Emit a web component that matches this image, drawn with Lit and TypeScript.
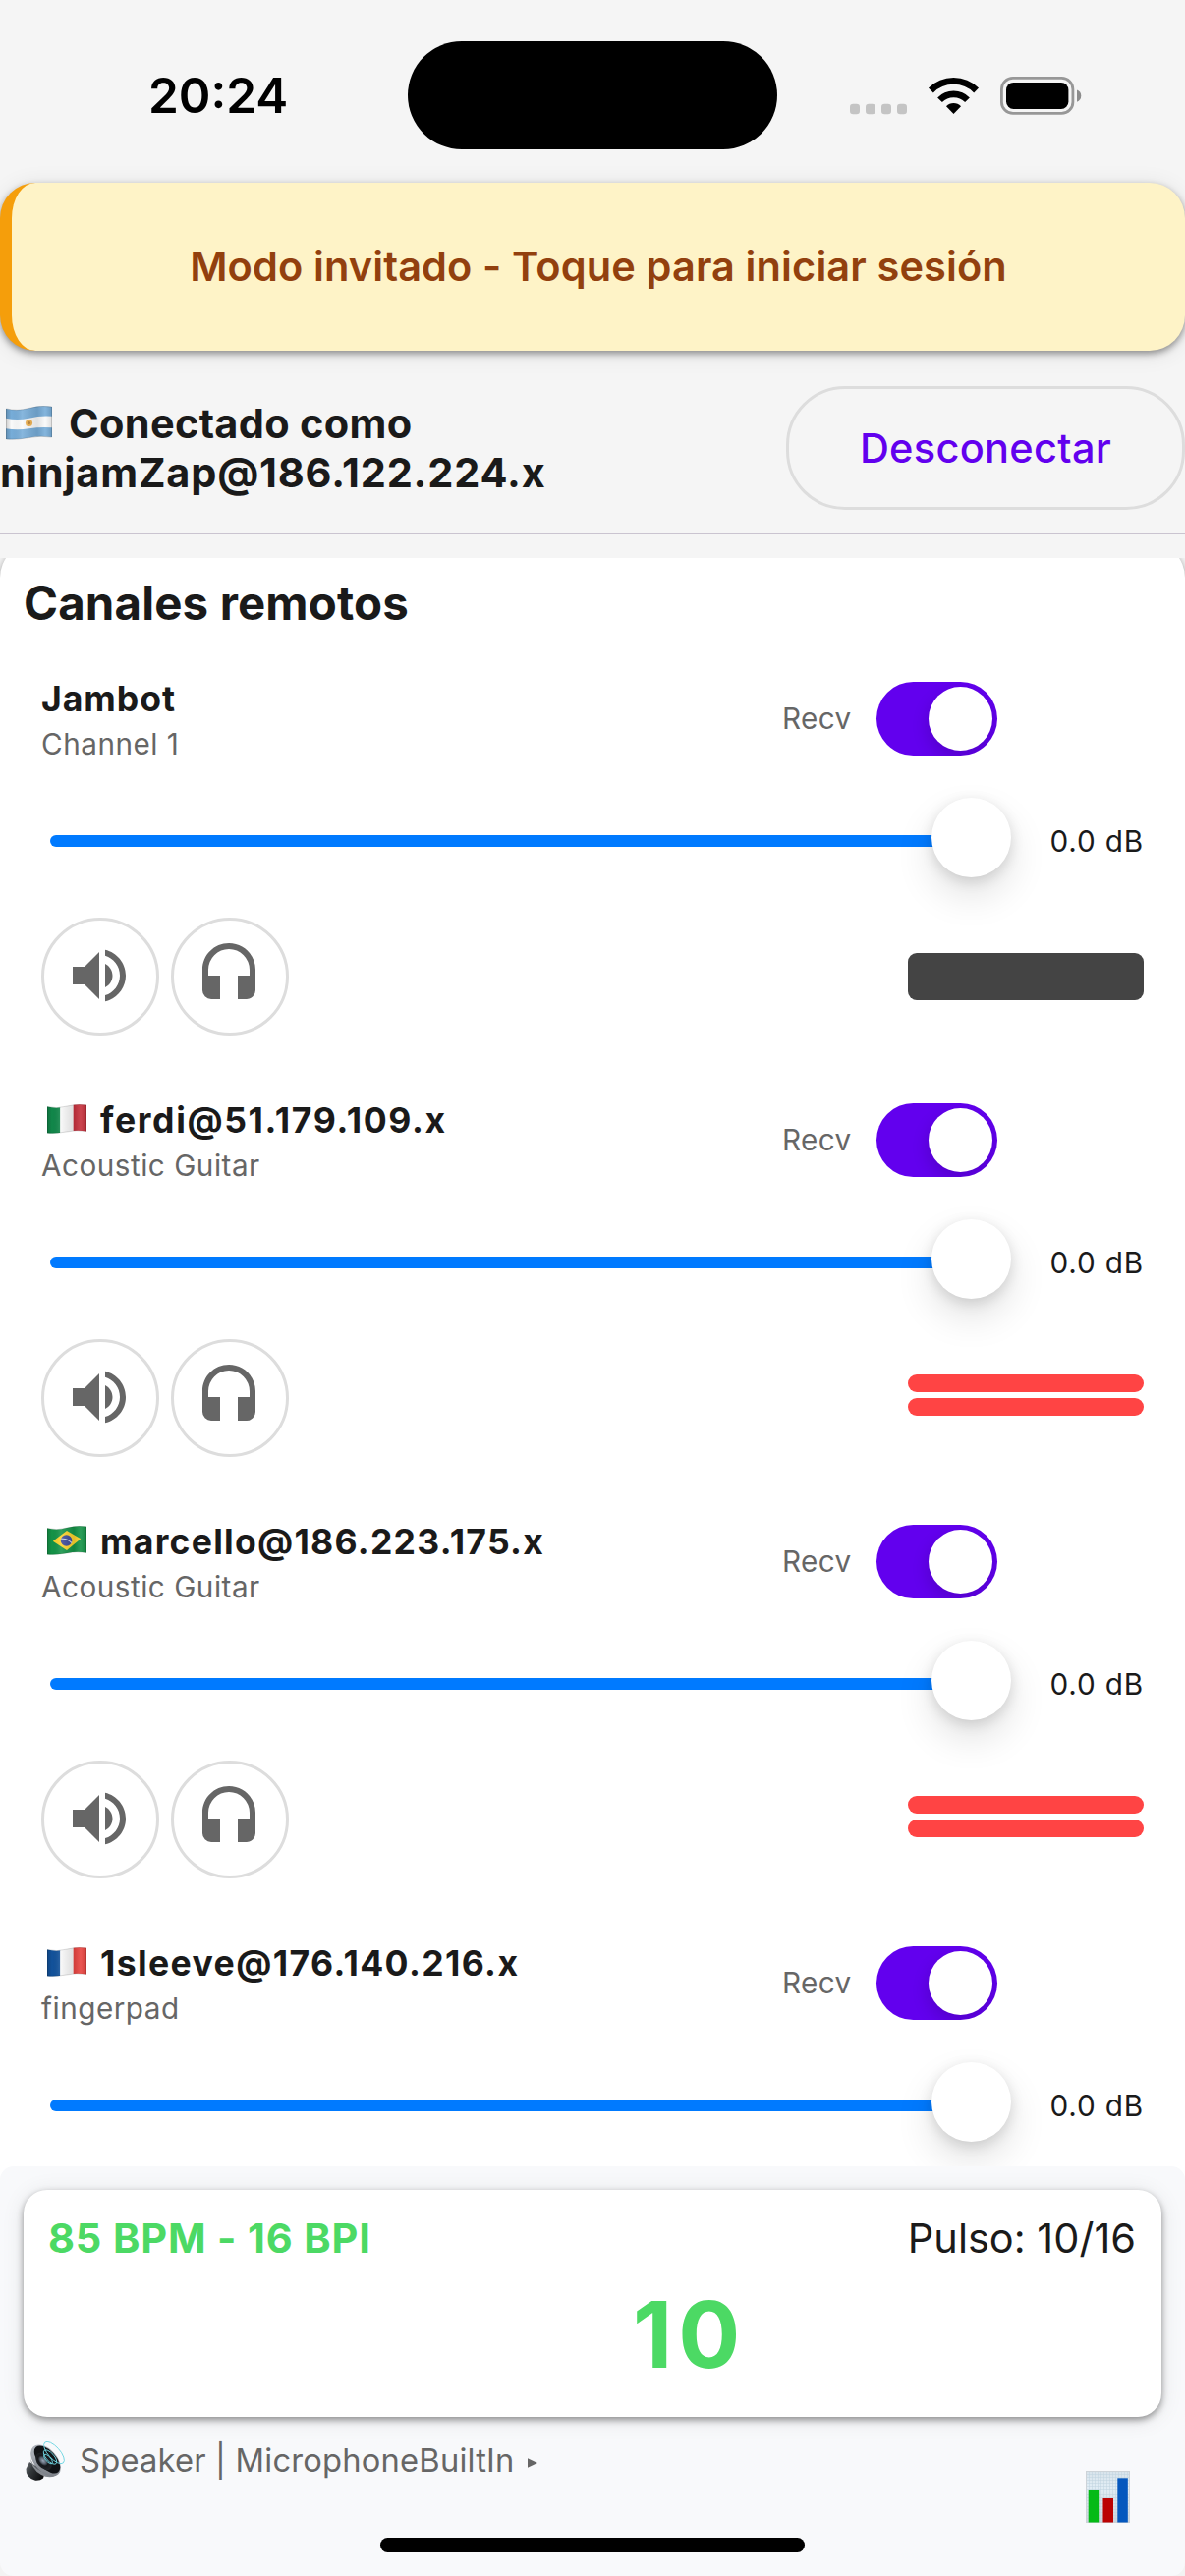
import { LitElement, html, css, svg, nothing } from "lit";
import { customElement, property } from "lit/decorators.js";
import { styleMap } from "lit/directives/style-map.js";

type Country = "ar" | "it" | "br" | "fr";

interface Channel {
  user: string;
  country?: Country;
  name: string;
  gain: string;
  clipping: boolean;
  tracking: number;
}

const CHANNELS: Channel[] = [
  { user: "Jambot", name: "Channel 1", gain: "0.0 dB", clipping: false, tracking: 0.95 },
  { user: "ferdi@51.179.109.x", country: "it", name: "Acoustic Guitar", gain: "0.0 dB", clipping: true, tracking: 1.63 },
  { user: "marcello@186.223.175.x", country: "br", name: "Acoustic Guitar", gain: "0.0 dB", clipping: true, tracking: 1.26 },
  { user: "1sleeve@176.140.216.x", country: "fr", name: "fingerpad", gain: "0.0 dB", clipping: true, tracking: 1.38 },
];

/** Waving flag, drawn on a 48x36 cloth. */
@customElement("country-flag")
export class CountryFlag extends LitElement {
  static styles = css`
    :host {
      display: inline-block;
      line-height: 0;
    }
    svg {
      display: block;
      width: 100%;
      height: 100%;
    }
  `;

  @property() country: Country = "ar";

  private cloth() {
    switch (this.country) {
      case "it":
        return svg`<rect width="16" height="36" fill="#11874a"/><rect x="16" width="16" height="36" fill="#f7f7f7"/><rect x="32" width="16" height="36" fill="#c6303c"/>`;
      case "fr":
        return svg`<rect width="16" height="36" fill="#12529b"/><rect x="16" width="16" height="36" fill="#f7f7f7"/><rect x="32" width="16" height="36" fill="#e8433f"/>`;
      case "br":
        return svg`<rect width="48" height="36" fill="#149347"/><path d="M7 19L24 6L41 16L24 30Z" fill="#fcd22c"/><circle cx="23.5" cy="18" r="7" fill="#3c4a9b"/><path d="M17 16q7-1 13 5" fill="none" stroke="#cfd8ea" stroke-width="1.3"/>`;
      default:
        return svg`<rect width="48" height="36" fill="#77add9"/><path d="M0 13q12 3 24 0t24-2v12q-12-1-24 1t-24 0z" fill="#fafafa"/><circle cx="24" cy="18" r="3.6" fill="#eeb04e"/><circle cx="24" cy="18" r="1.6" fill="#b98035"/>`;
    }
  }

  render() {
    return html`<svg viewBox="0 0 48 36" preserveAspectRatio="none">
      <defs>
        <clipPath id="wave"><path d="M0 3Q12 6 24 2.500T48 1V33Q36 31 24 33.500T0 35Z" /></clipPath>
        <linearGradient id="fold" x1="0" x2="1" y1="0" y2="0">
          <stop offset="0" stop-color="#000" stop-opacity=".18" />
          <stop offset=".12" stop-color="#000" stop-opacity="0" />
          <stop offset=".35" stop-color="#fff" stop-opacity=".12" />
          <stop offset=".68" stop-color="#000" stop-opacity=".1" />
          <stop offset=".85" stop-color="#fff" stop-opacity=".1" />
          <stop offset="1" stop-color="#000" stop-opacity=".12" />
        </linearGradient>
      </defs>
      <g clip-path="url(#wave)">
        ${this.cloth()}
        <rect width="48" height="36" fill="url(#fold)" />
      </g>
      <path d="M.4 3Q12 6 24 2.500T47.600 1V33Q36 31 24 33.500T.4 35Z" fill="none" stroke="#000" stroke-opacity=".18" stroke-width=".9" />
    </svg>`;
  }
}

@customElement("status-bar")
export class StatusBar extends LitElement {
  static styles = css`
    :host {
      display: flex;
      align-items: center;
      box-sizing: border-box;
      height: 186px;
      padding: 42px 0 34px;
      flex: none;
    }
    .time {
      box-sizing: border-box;
      width: 415px;
      padding-left: 151px;
      font-size: 49.5px;
      font-weight: 600;
      line-height: 60px;
      color: #000;
    }
    .island {
      width: 376px;
      height: 110px;
      border-radius: 55px;
      background: #000;
      flex: none;
    }
    .icons {
      display: block;
      margin-left: 74px;
      width: 236px;
      height: 39px;
      flex: none;
    }
  `;

  render() {
    return html`
      <div class="time">20:24</div>
      <div class="island"></div>
      <svg class="icons" viewBox="865 78 236 39">
        ${[865, 881, 897, 913].map((x) => svg`<rect x=${x} y="105.800" width="10" height="10.400" rx="3.200" fill="#c4c4c4"/>`)}
        <path d="M970.500 116L963 108.200A10.500 10.500 0 0 1 978 108.200Z" fill="#000" />
        <path d="M956.500 101.800A19.500 19.500 0 0 1 984.500 101.800" fill="none" stroke="#000" stroke-width="6.600" />
        <path d="M947.400 92A32.500 32.500 0 0 1 993.600 92" fill="none" stroke="#000" stroke-width="6.800" />
        <rect x="1019.400" y="79.400" width="72.500" height="36" rx="11.500" fill="none" stroke="#979797" stroke-width="2.800" />
        <rect x="1024" y="84" width="63.400" height="27" rx="7.500" fill="#000" />
        <path d="M1096 91.500a6.500 6.500 0 0 1 0 12.200z" fill="#8c8c8c" />
      </svg>
    `;
  }
}

@customElement("level-meter")
export class LevelMeter extends LitElement {
  static styles = css`
    :host {
      display: flex;
      flex-direction: column;
      gap: 6px;
      width: 240px;
      height: 48px;
    }
    .idle {
      height: 48px;
      border-radius: 9px;
      background: #444;
    }
    .bar {
      height: 18px;
      border-radius: 9px;
      background: #f44;
    }
  `;

  @property({ type: Boolean }) clipping = false;

  render() {
    return this.clipping
      ? html`<div class="bar"></div><div class="bar"></div>`
      : html`<div class="idle"></div>`;
  }
}

@customElement("remote-channel")
export class RemoteChannel extends LitElement {
  static styles = css`
    :host {
      display: block;
      height: 368px;
      padding: 0 42px 61px;
    }
    .info {
      display: flex;
      align-items: center;
      height: 90px;
    }
    .names {
      width: 754px;
      padding-top: 2px;
    }
    .user {
      font-size: 35.6px;
      font-weight: 700;
      line-height: 50px;
      color: #1a1a1a;
      white-space: nowrap;
    }
    country-flag {
      width: 40px;
      height: 30px;
      margin: 0 14px 0 6px;
      vertical-align: -1px;
    }
    .name,
    .recv {
      font-size: 29.7px;
      line-height: 40px;
      letter-spacing: 0.5px;
      color: #666;
    }
    .recv {
      width: 96px;
      letter-spacing: 0.4px;
    }
    .switch {
      display: flex;
      justify-content: flex-end;
      align-items: center;
      box-sizing: border-box;
      width: 123px;
      height: 75px;
      padding-right: 5px;
      border-radius: 37.5px;
      background: #6200ee;
      overflow: hidden;
    }
    .knob {
      width: 65px;
      height: 65px;
      border-radius: 50%;
      background: #fff;
      box-shadow: 0 7px 18px rgba(0, 0, 0, 0.16);
    }
    .fader {
      display: flex;
      align-items: center;
      height: 88px;
      margin-top: 36px;
      padding-left: 9px;
    }
    .track {
      position: relative;
      width: 969px;
      height: 12px;
      border-radius: 6px;
      background: linear-gradient(to right, #007aff 940px, transparent 940px);
    }
    .thumb {
      position: absolute;
      right: -10px;
      top: -38px;
      width: 81px;
      height: 81px;
      border-radius: 50%;
      background: #fff;
      box-shadow: 0 18px 39px rgba(0, 0, 0, 0.12), 0 4px 14px rgba(0, 0, 0, 0.13);
    }
    .gain {
      margin: -1px 0 0 49px;
      font-size: 29.7px;
      line-height: 40px;
      letter-spacing: 0.85px;
      color: #1a1a1a;
      white-space: nowrap;
    }
    .controls {
      display: flex;
      align-items: center;
      gap: 12px;
      margin-top: 34px;
    }
    .round {
      display: flex;
      align-items: center;
      justify-content: center;
      box-sizing: border-box;
      width: 120px;
      height: 120px;
      border: 3px solid #ddd;
      border-radius: 50%;
      padding: 0 2px 2px 0;
    }
    .round svg {
      display: block;
      width: 72px;
      height: 72px;
      fill: #666;
    }
    level-meter {
      margin-left: auto;
    }
  `;

  @property({ attribute: false }) channel!: Channel;

  render() {
    const c = this.channel;
    return html`
      <div class="info">
        <div class="names">
          <div class="user" style=${styleMap({ letterSpacing: `${c.tracking}px` })}>${c.country
            ? html`<country-flag .country=${c.country}></country-flag>`
            : nothing}${c.user}</div>
          <div class="name">${c.name}</div>
        </div>
        <div class="recv">Recv</div>
        <div class="switch"><div class="knob"></div></div>
      </div>
      <div class="fader">
        <div class="track"><div class="thumb"></div></div>
        <div class="gain">${c.gain}</div>
      </div>
      <div class="controls">
        <div class="round">
          <svg viewBox="0 0 24 24"><path d="M14,3.23V5.29C16.89,6.15 19,8.83 19,12C19,15.17 16.89,17.84 14,18.7V20.77C18,19.86 21,16.28 21,12C21,7.72 18,4.14 14,3.23M16.5,12C16.5,10.23 15.5,8.71 14,7.97V16C15.5,15.29 16.5,13.76 16.5,12M3,9V15H7L12,20V4L7,9H3Z" /></svg>
        </div>
        <div class="round">
          <svg viewBox="0 0 24 24"><path d="M12,1C7,1 3,5 3,10V17A3,3 0 0,0 6,20H9V12H5V10A7,7 0 0,1 12,3A7,7 0 0,1 19,10V12H15V20H18A3,3 0 0,0 21,17V10C21,5 16.97,1 12,1Z" /></svg>
        </div>
        <level-meter ?clipping=${c.clipping}></level-meter>
      </div>
    `;
  }
}

@customElement("transport-panel")
export class TransportPanel extends LitElement {
  static styles = css`
    :host {
      display: block;
      position: relative;
      flex: none;
      box-sizing: border-box;
      height: 417px;
      padding: 24px 24px 0;
      background: #f8f9fb;
    }
    .card {
      box-sizing: border-box;
      height: 231px;
      padding: 24px 26px 0 25px;
      border-radius: 24px;
      background: #fff;
      box-shadow: 0 3px 7px rgba(0, 0, 0, 0.4), 0 3px 24px rgba(0, 0, 0, 0.09);
    }
    .tempo {
      display: flex;
      justify-content: space-between;
      font-size: 41.5px;
      line-height: 50px;
      color: #1a1a1a;
    }
    .bpm {
      font-weight: 700;
      letter-spacing: 0.84px;
      color: #4cd964;
    }
    .beat {
      margin: 16px 0 0 595px;
      font-size: 93.5px;
      font-weight: 700;
      line-height: 114px;
      letter-spacing: 6px;
      color: #4cd964;
    }
    .footer {
      display: flex;
      align-items: flex-start;
      padding: 25px 32px 0 2px;
    }
    .speaker {
      width: 40px;
      height: 40px;
      margin-right: 15px;
    }
    .route {
      margin-top: -1px;
      font-size: 32.7px;
      line-height: 40px;
      letter-spacing: 0.2px;
      color: #666;
    }
    .caret {
      width: 10px;
      height: 10px;
      margin: 17px 0 0 13px;
      fill: #666;
    }
    .chart {
      width: 45px;
      height: 53px;
      margin: 30px 0 0 auto;
    }
    svg {
      display: block;
    }
    .home {
      position: absolute;
      left: 387px;
      top: 378px;
      width: 432px;
      height: 15px;
      border-radius: 8px;
      background: #000;
    }
  `;

  render() {
    return html`
      <div class="card">
        <div class="tempo"><span class="bpm">85 BPM - 16 BPI</span><span>Pulso: 10/16</span></div>
        <div class="beat">10</div>
      </div>
      <div class="footer">
        <svg class="speaker" viewBox="0 0 40 40">
          <defs>
            <linearGradient id="body" x1="0" y1="0" x2="1" y2=".5">
              <stop offset="0" stop-color="#6d7276" /><stop offset=".4" stop-color="#33373a" /><stop offset="1" stop-color="#0c0d0e" />
            </linearGradient>
            <linearGradient id="rim" x1="0" y1="0" x2="1" y2="1">
              <stop offset="0" stop-color="#b9bec6" /><stop offset=".5" stop-color="#a4a9b1" /><stop offset="1" stop-color="#6a6e74" />
            </linearGradient>
            <radialGradient id="cone" cx=".45" cy=".5" r=".6">
              <stop offset="0" stop-color="#9aa7ba" /><stop offset=".3" stop-color="#59616e" /><stop offset=".5" stop-color="#15171b" /><stop offset="1" stop-color="#24272c" />
            </radialGradient>
          </defs>
          <path d="M4 21L.5 28Q0 37 10 39.700Q15 40 18 37.500L20 31Z" fill="url(#body)" />
          <path d="M5 15Q6 30 30 35.500Q22 37.500 16 34Q5 28 5 15Z" fill="#85898f" />
          <ellipse cx="20.500" cy="19.500" rx="19" ry="11.500" transform="rotate(48 20.500 19.500)" fill="url(#rim)" />
          <ellipse cx="22" cy="18.500" rx="17" ry="9" transform="rotate(48 22 18.500)" fill="#111316" />
          <ellipse cx="18.500" cy="20.500" rx="10" ry="6.500" transform="rotate(48 18.500 20.500)" fill="url(#cone)" />
          <g fill="none" stroke="#6fd6e2" stroke-width=".9">
            <ellipse cx="29" cy="11.500" rx="14" ry="6" transform="rotate(48 29 11.500)" />
            <ellipse cx="25" cy="16" rx="9" ry="4" transform="rotate(48 25 16)" />
            <ellipse cx="23" cy="18" rx="6" ry="2.500" transform="rotate(48 23 18)" />
          </g>
        </svg>
        <div class="route">Speaker | MicrophoneBuiltIn</div>
        <svg class="caret" viewBox="0 0 10 10"><path d="M0 .3L10 5L0 9.700Z" /></svg>
        <svg class="chart" viewBox="0 0 45 53">
          <defs>
            <linearGradient id="paper" x1="0" y1="0" x2="0" y2="1">
              <stop offset="0" stop-color="#d8e3ea" /><stop offset=".3" stop-color="#e1edf5" /><stop offset="1" stop-color="#cfd5dc" />
            </linearGradient>
            <pattern id="grid" width="3" height="3" patternUnits="userSpaceOnUse">
              <path d="M0 .5H3M.5 0V3" stroke="#bfd2de" stroke-width=".5" />
            </pattern>
          </defs>
          <rect width="45" height="53" fill="url(#paper)" />
          <rect width="45" height="53" fill="url(#grid)" />
          <rect x=".5" y=".5" width="44" height="52" fill="none" stroke="#cdd3d8" />
          <rect x="2.700" y="19" width="10.500" height="33.500" fill="#05ba16" />
          <rect x="17.500" y="28" width="10.500" height="24.500" fill="#bb0202" />
          <rect x="32.300" y="7.300" width="10.500" height="45.200" fill="#0558be" />
        </svg>
      </div>
      <div class="home"></div>
    `;
  }
}

@customElement("app-root")
export class AppRoot extends LitElement {
  static styles = css`
    :host {
      display: flex;
      flex-direction: column;
      width: 1206px;
      height: 2622px;
      overflow: hidden;
      background: #f5f5f5;
      font-family: Inter, "Liberation Sans", sans-serif;
    }
    .guest {
      display: flex;
      align-items: center;
      justify-content: center;
      flex: none;
      box-sizing: border-box;
      height: 171px;
      padding-bottom: 2px;
      border-left: 12px solid #f59e0b;
      border-radius: 36px;
      background: #fef3c7;
      box-shadow: 0 3px 7px rgba(0, 0, 0, 0.4), 0 3px 24px rgba(0, 0, 0, 0.09);
      font-size: 41.5px;
      font-weight: 600;
      letter-spacing: 0.12px;
      color: #92400e;
    }
    .session {
      display: flex;
      justify-content: space-between;
      align-items: center;
      flex: none;
      padding: 36px 0 24px;
      border-bottom: 1px solid #cac4d0;
    }
    .who {
      font-size: 41.5px;
      font-weight: 700;
      line-height: 50px;
      letter-spacing: 0.3px;
      color: #1a1a1a;
    }
    .who country-flag {
      width: 47px;
      height: 35px;
      margin: 0 17px 0 6px;
      vertical-align: -2px;
    }
    .address {
      letter-spacing: 0.8px;
    }
    .disconnect {
      display: flex;
      align-items: center;
      justify-content: center;
      box-sizing: border-box;
      width: 406px;
      height: 126px;
      border: 3px solid #ddd;
      border-radius: 60px;
      font-size: 41.5px;
      font-weight: 500;
      letter-spacing: 0.3px;
      color: #6200ee;
    }
    .scroller {
      flex: 1;
      min-height: 0;
      margin-top: 24px;
      overflow: hidden;
      background: #f3f3f3;
    }
    .list {
      margin-top: -16px;
      padding-top: 38px;
      border-radius: 36px;
      background: #fff;
      box-shadow: 0 3px 7px rgba(0, 0, 0, 0.4);
    }
    .title {
      margin: 0 0 48px 24px;
      font-size: 47.4px;
      font-weight: 700;
      line-height: 48px;
      letter-spacing: 0.15px;
      color: #1a1a1a;
    }
    .dock {
      flex: none;
      background: linear-gradient(#fff 50%, #f3f3f3 50%);
    }
    transport-panel {
      border-radius: 14px;
    }
  `;

  render() {
    return html`
      <status-bar></status-bar>
      <div class="guest">Modo invitado - Toque para iniciar sesión</div>
      <div class="session">
        <div class="who">
          <div><country-flag country="ar"></country-flag>Conectado como</div>
          <div class="address">ninjamZap@186.122.224.x</div>
        </div>
        <div class="disconnect">Desconectar</div>
      </div>
      <div class="scroller">
        <div class="list">
          <div class="title">Canales remotos</div>
          ${CHANNELS.map((c) => html`<remote-channel .channel=${c}></remote-channel>`)}
        </div>
      </div>
      <div class="dock"><transport-panel></transport-panel></div>
    `;
  }
}
